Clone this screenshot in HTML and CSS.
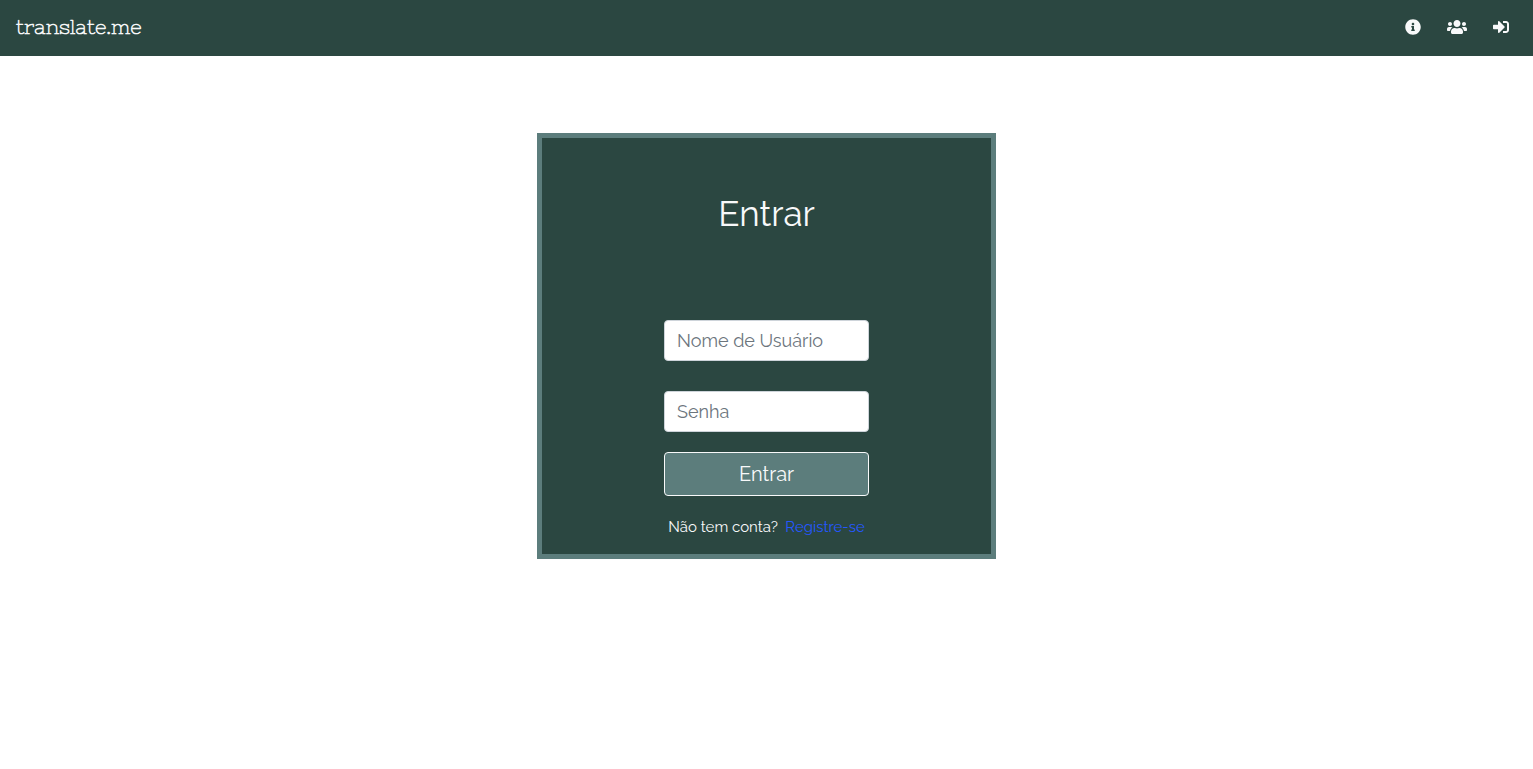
FILE: index.html
```html
<!DOCTYPE html>
<html lang="pt-BR">
<head>
<meta charset="utf-8">
<title>translate.me</title>
<link rel="stylesheet" href="styles.css">
</head>
<body>
<header class="navbar">
  <a class="brand">translate.me</a>
  <nav class="nav-icons">
    <svg width="16" height="16" viewBox="0 0 512 512"><path d="M256 8C119.043 8 8 119.083 8 256c0 136.997 111.043 248 248 248s248-111.003 248-248C504 119.083 392.957 8 256 8zm0 110c23.196 0 42 18.804 42 42s-18.804 42-42 42-42-18.804-42-42 18.804-42 42-42zm56 254c0 6.627-5.373 12-12 12h-88c-6.627 0-12-5.373-12-12v-24c0-6.627 5.373-12 12-12h12v-64h-12c-6.627 0-12-5.373-12-12v-24c0-6.627 5.373-12 12-12h64c6.627 0 12 5.373 12 12v100h12c6.627 0 12 5.373 12 12v24z"/></svg>
    <svg width="20" height="16" viewBox="0 0 640 512"><path d="M96 224c35.300 0 64-28.700 64-64s-28.700-64-64-64-64 28.700-64 64 28.700 64 64 64zm448 0c35.300 0 64-28.700 64-64s-28.700-64-64-64-64 28.700-64 64 28.700 64 64 64zm32 32h-64c-17.600 0-33.500 7.100-45.100 18.600 40.300 22.100 68.900 62 75.100 109.400h66c17.700 0 32-14.300 32-32v-32c0-35.300-28.700-64-64-64zm-256 0c61.900 0 112-50.100 112-112S381.900 32 320 32 208 82.100 208 144s50.100 112 112 112zm76.800 32h-8.300c-20.800 10-43.900 16-68.500 16s-47.600-6-68.500-16h-8.300C179.600 288 128 339.600 128 403.200V432c0 26.500 21.500 48 48 48h288c26.500 0 48-21.500 48-48v-28.800c0-63.600-51.600-115.200-115.200-115.200zm-223.700-13.400C161.500 263.100 145.600 256 128 256H64c-35.300 0-64 28.700-64 64v32c0 17.700 14.300 32 32 32h65.900c6.300-47.400 34.900-87.300 75.200-109.400z"/></svg>
    <svg width="16" height="16" viewBox="0 0 512 512"><path d="M416 448h-84c-6.600 0-12-5.400-12-12v-40c0-6.600 5.400-12 12-12h84c17.700 0 32-14.300 32-32V160c0-17.700-14.300-32-32-32h-84c-6.600 0-12-5.400-12-12V76c0-6.600 5.400-12 12-12h84c53 0 96 43 96 96v192c0 53-43 96-96 96zm-47-209L201 71c-15-15-41-4.500-41 17v96H24c-13.300 0-24 10.700-24 24v96c0 13.300 10.700 24 24 24h136v96c0 21.500 26 32 41 17l168-168c9.300-9.400 9.300-24.600 0-34z"/></svg>
  </nav>
</header>
<main class="page">
  <section class="card">
    <h1 class="title">Entrar</h1>
    <form class="login">
      <input class="field" type="text" placeholder="Nome de Usuário">
      <input class="field" type="password" placeholder="Senha">
      <button class="submit" type="button">Entrar</button>
    </form>
    <p class="register"><span>Não tem conta?</span><a class="link">Registre-se</a></p>
  </section>
</main>
</body>
</html>
```
FILE: styles.css
```css
* { box-sizing: border-box; }
body {
  margin: 0;
  background: #fff;
  font-family: Raleway, Lato, sans-serif;
}
.navbar {
  height: 56px;
  padding: 0 24px 0 16px;
  display: flex;
  align-items: center;
  justify-content: space-between;
  background: #2b4741;
  color: #f8f9fa;
}
.brand {
  margin-bottom: 2px;
  font-family: "Nixie One", "DejaVu Serif", serif;
  font-weight: 700;
  font-size: 20px;
  line-height: 30px;
}
.nav-icons {
  display: flex;
  gap: 26px;
  margin-bottom: 2px;
}
.nav-icons svg { display: block; fill: #f8f9fa; }
.page {
  display: flex;
  justify-content: center;
  padding-top: 77px;
}
.card {
  width: 459px;
  height: 426px;
  border: 5px solid #5c7d7c;
  background: #2b4741;
  color: #f8f9fa;
  display: flex;
  flex-direction: column;
  align-items: center;
}
.title {
  margin: 52px 0 0;
  font-size: 35px;
  line-height: 48px;
  font-weight: 400;
}
.login {
  width: 205px;
  margin-top: 82px;
  display: flex;
  flex-direction: column;
}
.field {
  width: 100%;
  height: 41px;
  margin: 0 0 30px;
  padding: 0 12px;
  border: 1px solid #ced4da;
  border-radius: 4px;
  background: #fff;
  font: 400 18px Raleway, Lato, sans-serif;
}
.field + .field { margin-bottom: 20px; }
.field::placeholder { color: #6c757d; opacity: 1; }
.submit {
  height: 44px;
  padding: 0;
  border: 1px solid #f8f9fa;
  border-radius: 4px;
  background: #5c7d7c;
  color: #f8f9fa;
  font: 400 20px Raleway, Lato, sans-serif;
}
.register {
  margin: 20px 0 0;
  display: flex;
  gap: 7.5px;
  font-size: 15px;
  line-height: 22px;
  white-space: nowrap;
}
.link { color: #2457ff; }
```
